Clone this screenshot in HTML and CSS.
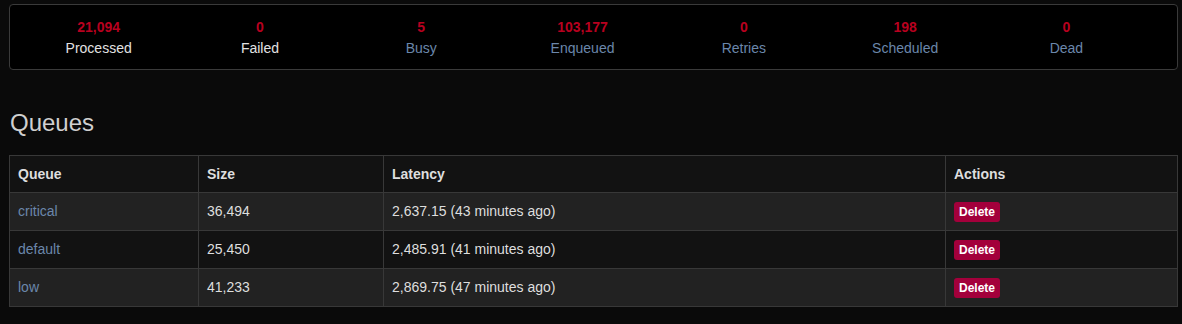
FILE: index.html
```html
<!DOCTYPE html>
<html>
<head>
<meta charset="utf-8">
<link rel="stylesheet" href="styles.css">
</head>
<body>
<div class="summary">
  <ul class="stats">
    <li><span class="count">21,094</span><span class="label plain">Processed</span></li>
    <li><span class="count">0</span><span class="label plain">Failed</span></li>
    <li><span class="count">5</span><a class="label">Busy</a></li>
    <li><span class="count">103,177</span><a class="label">Enqueued</a></li>
    <li><span class="count">0</span><a class="label">Retries</a></li>
    <li><span class="count">198</span><a class="label">Scheduled</a></li>
    <li><span class="count">0</span><a class="label">Dead</a></li>
  </ul>
</div>
<h3 class="title">Queues</h3>
<table class="queues">
  <thead>
    <tr><th class="c1">Queue</th><th class="c2">Size</th><th class="c3">Latency</th><th class="c4">Actions</th></tr>
  </thead>
  <tbody>
    <tr><td><a>critical</a></td><td>36,494</td><td>2,637.15 (43 minutes ago)</td><td><button class="btn">Delete</button></td></tr>
    <tr><td><a>default</a></td><td>25,450</td><td>2,485.91 (41 minutes ago)</td><td><button class="btn">Delete</button></td></tr>
    <tr><td><a>low</a></td><td>41,233</td><td>2,869.75 (47 minutes ago)</td><td><button class="btn">Delete</button></td></tr>
  </tbody>
</table>
</body>
</html>
```
FILE: styles.css
```css
html, body {
  margin: 0;
  background: #0a0a0a;
  color: #dedede;
  font-family: "Liberation Sans", Arial, sans-serif;
  font-size: 14px;
  line-height: 20px;
}
body {
  padding: 4px 4px 0 9px;
}
.summary {
  width: 1169px;
  box-sizing: border-box;
  background: #000;
  border: 1px solid #3a3a3a;
  border-radius: 4px;
  padding: 12px 0 11px 8px;
}
.stats {
  list-style: none;
  margin: 0;
  padding: 0;
  display: grid;
  grid-template-columns: repeat(7, 161.3px);
}
.stats li {
  display: flex;
  flex-direction: column;
  align-items: center;
}
.count {
  color: #b8001f;
  font-weight: bold;
}
.label {
  color: #6b87ab;
  margin-top: 1px;
}
.label.plain {
  color: #e2e2e2;
}
.title {
  margin: 40px 0 0 1px;
  font-size: 24px;
  font-weight: normal;
  line-height: 26px;
  color: #d0d0d0;
}
.queues {
  margin-top: 19px;
  width: 1169px;
  border-collapse: collapse;
  border: 1px solid #383838;
}
.queues th, .queues td {
  border: 1px solid #383838;
  padding: 8px;
  text-align: left;
  vertical-align: middle;
}
.queues th {
  background: #121212;
  font-weight: bold;
  color: #dedede;
}
.queues td {
  line-height: 21px;
  color: #dedede;
}
.queues tbody tr:nth-child(odd) { background: #222; }
.queues tbody tr:nth-child(even) { background: #121212; }
.c1 { width: 172px; }
.c2 { width: 168px; }
.c3 { width: 545px; }
.queues a { color: #6b87ab; }
.btn {
  background: #a3003b;
  color: #fff;
  border: none;
  border-radius: 3px;
  font-family: "Liberation Sans", Arial, sans-serif;
  font-size: 12px;
  font-weight: bold;
  line-height: 18px;
  padding: 1px 5px;
  display: block;
}
```
